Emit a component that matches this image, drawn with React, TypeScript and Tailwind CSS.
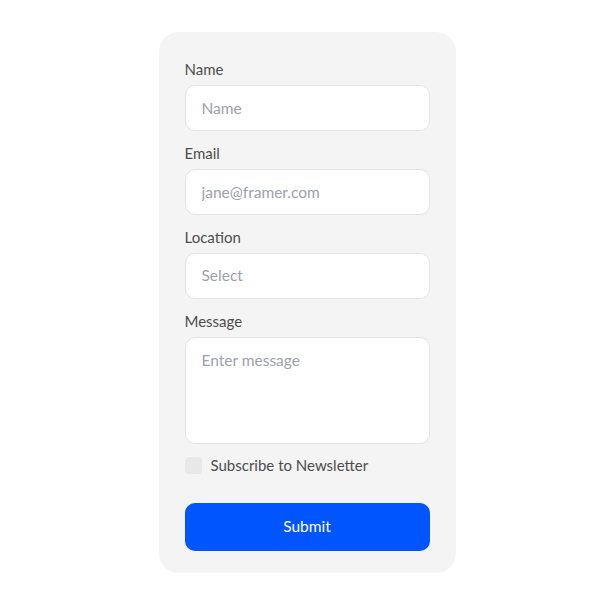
export default function App() {
  return (
    <div className="flex min-h-screen items-center justify-center bg-white font-['Lato',sans-serif]">
      <form
        className="flex w-[297px] flex-col rounded-[20px] bg-[#f4f4f4] px-[26px] pb-[22px] pt-[26px]"
        onSubmit={(e) => e.preventDefault()}
      >
        <Field label="Name">
          <input
            placeholder="Name"
            className="block h-[46px] w-full rounded-[10px] border border-[#e4e4e4] bg-white px-4 text-[15.5px] text-[#333] outline-none placeholder:text-[#9ba1ad]"
          />
        </Field>
        <Field label="Email">
          <input
            placeholder="jane@framer.com"
            className="block h-[46px] w-full rounded-[10px] border border-[#e4e4e4] bg-white px-4 text-[15.5px] text-[#333] outline-none placeholder:text-[#9ba1ad]"
          />
        </Field>
        <Field label="Location">
          <div className="flex h-[46px] w-full items-center rounded-[10px] border border-[#e4e4e4] bg-white px-4 text-[15.5px] text-[#9ba1ad]">
            Select
          </div>
        </Field>
        <Field label="Message">
          <textarea
            placeholder="Enter message"
            className="block h-[107px] w-full resize-none rounded-[10px] border border-[#e4e4e4] bg-white px-4 py-[11px] text-[15.5px] text-[#333] outline-none placeholder:text-[#9ba1ad]"
          />
        </Field>

        <label className="flex h-[22px] items-center gap-[9px] text-[15px] text-[#4d4d4d]">
          <span className="h-[17px] w-[17px] rounded-[4px] bg-[#e8e8e8]" />
          Subscribe to Newsletter
        </label>

        <button
          type="submit"
          className="mt-[26px] h-[48px] w-full rounded-[10px] bg-[#0055ff] text-[15.5px] text-white"
        >
          Submit
        </button>
      </form>
    </div>
  );
}

function Field({ label, children }: { label: string; children: React.ReactNode }) {
  return (
    <div className="mb-[11px] flex flex-col">
      <span className="h-[22px] text-[15px] leading-[22px] text-[#4d4d4d]">{label}</span>
      <div className="mt-[5px]">{children}</div>
    </div>
  );
}
